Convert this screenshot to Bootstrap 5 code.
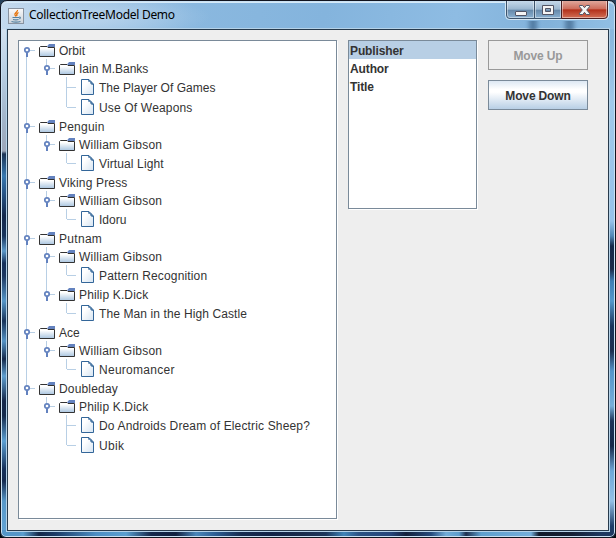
<!DOCTYPE html>
<html lang="en">
<head>
<meta charset="utf-8">
<title>CollectionTreeModel Demo</title>
<link href="https://cdn.jsdelivr.net/npm/bootstrap@5.3.0/dist/css/bootstrap.min.css" rel="stylesheet">
<style>
body{width:616px;height:538px;font:12px/18px "Liberation Sans",Arial,sans-serif;color:#333;background:linear-gradient(#26425c,#101a28 30%,#05080e)}
.frame{width:616px;height:538px;border:1px solid #11141f;border-radius:7px 7px 6px 6px;padding:1px 0 0;
 box-shadow:inset 0 0 0 1px #c9e0f2;
 background:
 linear-gradient(90deg,#5596c8 0 18px,#5b9fd0 22px,#14284a 38px,#1c3c68 55px,#4c8ec4 95px,#5a9fd0 125px,#14284c 150px,#102040 175px,#4a86ba 195px,#2c5c92 215px,#172c50 240px,#122448 270px,#182c4c 300px,#1c365c 325px,#3f84b8 343px,#2a5284 358px,#24457a 390px,#12203c 405px,#244a7c 430px,#72acd8 445px,#5c9ccc 458px,#1e3050 465px,#5e9fce 480px,#74aeda 530px,#101a2c 538px,#141f34 570px,#1e3860 600px) 0 100%/100% 7px no-repeat,
 linear-gradient(#d1e0ef 0 30px,#b9cfe4 70px,#a1b3c8 120px,#9ca6b8 150px,#1b3354 153px,#3878b0 175px,#2a598c 190px,#14284c 215px,#17335c 235px,#5c98c8 250px,#16305a 262px,#1d3760 275px,#5696c8 300px,#18335a 320px,#5592c4 340px,#14294c 358px,#5f9ecf 375px,#16284a 400px,#152a4c 415px,#5c9fd2 440px,#16305a 468px,#152a50 480px,#5797c8 500px,#65a5d6) 0 0/7px 100% no-repeat,
 linear-gradient(#8ab8de 0 40px,#a0c9ea 100px,#96c2ea 220px,#5288b6 235px,#14284a 245px,#1c2b4a 268px,#3f7eb4 280px,#5598cc 300px,#19345c 325px,#1c2f50 350px,#5595ca 370px,#77afd9 405px,#1d3358 420px,#16284a 445px,#6ea8d8 470px,#93c0e6 500px,#1c3c68 525px) 100% 0/7px 100% no-repeat,
 #8ab8df}
.caption{height:27px;margin:0 1px;padding-left:6px;border-radius:5px 5px 0 0;border-top:1px solid #d6eaf8;
 background:radial-gradient(ellipse 130px 24px at 78px 14px,#c3daef99 25%,#c3daef00),
 linear-gradient(100deg,#c5daee,#a0c5e5 75px,#8ab8df 190px,#84b4dd 320px,#8ebce3 450px,#82b2da 540px,#91bfe4)}
.caption-text{font:12px/16px "Noto Sans","Open Sans",sans-serif;color:#000;letter-spacing:-.28px;margin:4px 0 0 5px}
.java{width:16px;height:16px;margin-top:5px}
.controls{margin:-2px 5px 0 0;height:19px}
.client{margin:0 6px;width:602px;height:502px;border:1px solid #273a4c;box-shadow:0 0 0 1px #b5d2e8;background:#eee;padding:10px;gap:11px}
.pane{background:#fff;border:1px solid #7a8a99;box-shadow:1px 1px 0 #fff}
.tree{width:319px;height:479px}
.tree ul ul{padding-left:20px}
.tree li{background:linear-gradient(#b8cfe5,#b8cfe5) 7px 0/1px 100% no-repeat}
.tree li:last-child{background-size:1px 9px}
.tree li.leaf:last-child{background-size:1px 10px}
.tree>ul>li:first-child{background-position:7px 9px}
.node{height:18px}
.leaf .node{height:20px}
.node svg{width:40px;height:100%;flex:none}
.node span{padding-top:2px}
.node span,.keys li{white-space:nowrap}
.keys{width:129px;height:169px}
.keys li{height:18px;padding-left:1px;font-weight:700;line-height:20px;letter-spacing:-.12px}
.keys .picked{background:#b8cfe5}
.actions{gap:10px}
.swing{width:100px;height:30px;border:1px solid #7a8a99;border-radius:0;padding:0;font-size:12px;line-height:30px;font-weight:700;letter-spacing:-.15px;color:#333;background:linear-gradient(#dde8f3,#fff 30%,#fff 40%,#b8cfe5)}
.swing:disabled{opacity:1;color:#999;border-color:#999;background:#eee}
</style>
<script src="https://cdn.jsdelivr.net/npm/bootstrap@5.3.0/dist/js/bootstrap.bundle.min.js"></script>
</head>
<body class="overflow-hidden">
<div class="frame position-relative">
 <header class="caption d-flex align-items-start">
  <svg class="java" viewBox="0 0 16 16"><defs><linearGradient id="cup" x2="0" y2="1"><stop stop-color="#fafafa"/><stop offset="1" stop-color="#ccd2d9"/></linearGradient></defs><rect x=".5" y=".5" width="15" height="15" fill="url(#cup)" stroke="#8993a0"/><path d="M9.500 2C10 4 6 4.500 7 7l1 1.500M10.500 4.500C8 5.500 8.500 6.500 9 8" fill="none" stroke="#e76f00" stroke-width="1.300"/><path d="M4.500 9.500h6.500M5 11.500q3 .8 5.500 0M3.500 13.500q4.500 1.300 9 0M11 9q2.500 0 .5 2" fill="none" stroke="#5382a1" stroke-width="1.100"/></svg>
  <div class="caption-text">CollectionTreeModel Demo</div>
  <svg class="controls ms-auto" width="104" height="19" viewBox="0 0 104 19">
   <defs><linearGradient id="glass" x2="0" y2="1"><stop stop-color="#c6d9ea"/><stop offset=".48" stop-color="#9ab6cf"/><stop offset=".5" stop-color="#6487a8"/><stop offset="1" stop-color="#8db4d4"/></linearGradient>
   <linearGradient id="red" x2="0" y2="1"><stop stop-color="#dfa79b"/><stop offset=".46" stop-color="#cc6b5a"/><stop offset=".5" stop-color="#b3301a"/><stop offset="1" stop-color="#d4735a"/></linearGradient></defs>
   <path d="M.5 0V14.500Q.5 18.500 4.500 18.500H99Q103.500 18.500 103.500 14.500V0" fill="none" stroke="#d5e7f4"/>
   <path d="M1.500 0V14Q1.500 17.500 5 17.500H29.500V0" fill="url(#glass)" stroke="#3c536b"/><path d="M29.500 0V17.500H56.500V0" fill="url(#glass)" stroke="#3c536b"/><path d="M56.500 0V17.500H99Q102.500 17.500 102.500 14V0" fill="url(#red)" stroke="#4c1f22"/>
   <path d="M2.500 0V14Q2.500 16.500 5 16.500H28.500V0M30.500 0V16.500H55.500V0M57.500 0V16.500H98.500Q101.500 16.500 101.500 14V0" fill="none" stroke="#ffffff70"/>
   <rect x="10.500" y="10.500" width="11" height="4" rx=".5" fill="#f5f5f5" stroke="#535666"/>
   <path fill-rule="evenodd" d="M37.500 4.500h11v9h-11zM40.500 7.500v3h5v-3z" fill="#f5f5f5" stroke="#535666"/>
   <path d="M74.500 4.500h3.200l1.800 2.200 1.800-2.200h3.200v1.200L81.700 9l2.800 3.300v1.200h-3.200l-1.800-2.200-1.800 2.200h-3.200v-1.200L77.300 9l-2.800-3.300z" fill="#f5f5f5" stroke="#535666"/>
  </svg>
 </header>
 <svg class="position-absolute top-0 end-0" width="100" height="28"><defs><filter id="soft"><feGaussianBlur stdDeviation="2 .5"/></filter></defs><g filter="url(#soft)" fill="#355b82" opacity=".6"><path d="M14 20h8v8h-8zM50 20h9v8h-9z"/></g></svg>
 <main class="client d-flex align-items-start">
  <nav class="pane tree"><ul class="list-unstyled mb-0" id="tree"></ul></nav>
  <ul class="pane keys list-unstyled mb-0"><li class="picked">Publisher</li><li>Author</li><li>Title</li></ul>
  <div class="actions d-flex flex-column"><button class="btn swing" disabled>Move Up</button><button class="btn swing">Move Down</button></div>
 </main>
</div>
<svg class="position-absolute" width="0" height="0">
<defs><linearGradient id="fill" x2="0" y2="1"><stop offset=".2" stop-color="#fff"/><stop offset="1" stop-color="#a9c5e0"/></linearGradient>
<linearGradient id="page" x2="1" y2="1"><stop offset=".3" stop-color="#fff"/><stop offset="1" stop-color="#d5e4f2"/></linearGradient></defs>
<symbol id="folder" viewBox="0 0 40 18"><path d="M11 9.500h5" stroke="#b8cfe5"/><path d="M7 10h2v6H7z" fill="#6382bf"/><circle cx="8" cy="9" r="2.200" fill="#fff" stroke="#6382bf" stroke-width="1.700"/>
<path d="M20.500 15.500V6.500L21.500 5.500H28L29 6.500H35.500V15.500Z" fill="url(#fill)" stroke="#333"/><path d="M28 5.500 30 3h6v3h-7z" fill="#6382bf"/></symbol>
<symbol id="doc" viewBox="0 0 40 20"><path d="M8 10.500h9" stroke="#b8cfe5"/><path d="M22.500 2.500H30L34.500 7V17.500H22.500Z" fill="url(#page)" stroke="#336699"/><path d="M29 2.500 34.500 8M30 3v2M32 4.500V7h2" fill="none" stroke="#336699"/></symbol>
</svg>
<script>
const books = [
 ["Orbit", [["Iain M.Banks", ["The Player Of Games", "Use Of Weapons"]]]],
 ["Penguin", [["William Gibson", ["Virtual Light"]]]],
 ["Viking Press", [["William Gibson", ["Idoru"]]]],
 ["Putnam", [["William Gibson", ["Pattern Recognition"]], ["Philip K.Dick", ["The Man in the High Castle"]]]],
 ["Ace", [["William Gibson", ["Neuromancer"]]]],
 ["Doubleday", [["Philip K.Dick", ["Do Androids Dream of Electric Sheep?", "Ubik"]]]]
];
const tracking = {
 "The Player Of Games": .02, "Use Of Weapons": .17, "Penguin": .22, "William Gibson": .23, "Virtual Light": .12,
 "Viking Press": .17, "Putnam": .3, "Pattern Recognition": .15, "Philip K.Dick": .15, "The Man in the High Castle": .1,
 "Neuromancer": .27, "Doubleday": .17, "Do Androids Dream of Electric Sheep?": .155, "Ubik": .3
};
const node = (icon, label) => `<div class="node d-flex align-items-center"><svg><use href="#${icon}"/></svg><span style="letter-spacing:${tracking[label] || 0}px">${label}</span></div>`;
const render = item => typeof item === "string"
 ? `<li class="leaf">${node("doc", item)}</li>`
 : `<li>${node("folder", item[0])}<ul class="list-unstyled">${item[1].map(render).join("")}</ul></li>`;
document.getElementById("tree").innerHTML = books.map(render).join("");
</script>
</body>
</html>
